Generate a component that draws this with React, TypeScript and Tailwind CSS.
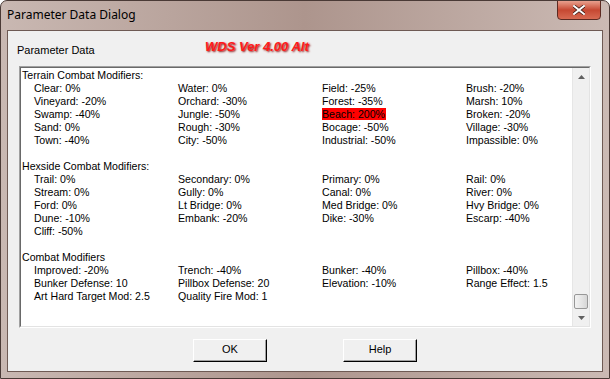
import React from 'react';

type Section = {
  title: string;
  rows: string[][];
};

const sections: Section[] = [
  {
    title: 'Terrain Combat Modifiers:',
    rows: [
      ['Clear: 0%', 'Water: 0%', 'Field: -25%', 'Brush: -20%'],
      ['Vineyard: -20%', 'Orchard: -30%', 'Forest: -35%', 'Marsh: 10%'],
      ['Swamp: -40%', 'Jungle: -50%', 'Beach: 200%', 'Broken: -20%'],
      ['Sand: 0%', 'Rough: -30%', 'Bocage: -50%', 'Village: -30%'],
      ['Town: -40%', 'City: -50%', 'Industrial: -50%', 'Impassible: 0%'],
    ],
  },
  {
    title: 'Hexside Combat Modifiers:',
    rows: [
      ['Trail: 0%', 'Secondary: 0%', 'Primary: 0%', 'Rail: 0%'],
      ['Stream: 0%', 'Gully: 0%', 'Canal: 0%', 'River: 0%'],
      ['Ford: 0%', 'Lt Bridge: 0%', 'Med Bridge: 0%', 'Hvy Bridge: 0%'],
      ['Dune: -10%', 'Embank: -20%', 'Dike: -30%', 'Escarp: -40%'],
      ['Cliff: -50%', '', '', ''],
    ],
  },
  {
    title: 'Combat Modifiers',
    rows: [
      ['Improved: -20%', 'Trench: -40%', 'Bunker: -40%', 'Pillbox: -40%'],
      ['Bunker Defense: 10', 'Pillbox Defense: 20', 'Elevation: -10%', 'Range Effect: 1.5'],
      ['Art Hard Target Mod: 2.5', 'Quality Fire Mod: 1', '', ''],
    ],
  },
];

function Cell({ text }: { text: string }) {
  if (text.startsWith('Beach')) {
    return (
      <div className="h-[13px] leading-[13px]">
        <span className="bg-[#ff0000] pr-[1px]">{text}</span>
      </div>
    );
  }
  return <div className="h-[13px] leading-[13px] whitespace-nowrap">{text}</div>;
}

function Scrollbar() {
  return (
    <div className="w-[17px] shrink-0 h-full bg-[#f0f0f0] border-l border-[#e6e6e6] flex flex-col">
      <div className="h-[17px] flex items-center justify-center">
        <svg width="7" height="4" viewBox="0 0 7 4">
          <path d="M3.5 0 L7 4 L0 4 Z" fill="#606060" />
        </svg>
      </div>
      <div className="flex-1" />
      <div className="h-[15px] mx-[1px] rounded-[2px] border border-[#979797] bg-gradient-to-r from-[#f2f2f2] via-[#e6e6e6] to-[#d6d6d6]" />
      <div className="h-[17px] flex items-center justify-center">
        <svg width="7" height="4" viewBox="0 0 7 4">
          <path d="M0 0 L7 0 L3.5 4 Z" fill="#606060" />
        </svg>
      </div>
    </div>
  );
}

function DlgButton({ label }: { label: string }) {
  return (
    <div className="w-[74px] h-[23px] border border-[#000] border-t-[#ffffff] border-l-[#ffffff] shadow-[inset_-1px_-1px_0_#a0a0a0] bg-[#f0f0f0] flex items-center justify-center text-[11px]">
      <span className="-mt-[1px]">{label}</span>
    </div>
  );
}

export default function App() {
  return (
    <div
      className="w-[610px] h-[379px] relative overflow-hidden rounded-t-[7px] border border-[#4a3a36] bg-gradient-to-r from-[#c9b8b2] via-[#ad958d] to-[#cbbab4] flex flex-col"
      style={{ fontFamily: '"Liberation Sans", Arial, sans-serif' }}
    >
      {/* title bar */}
      <div className="h-[29px] flex items-center pl-[6px] text-[12px] text-black" style={{ fontFamily: '"Noto Sans", "Liberation Sans", sans-serif' }}>
        <span className="-mt-[2px]">Parameter Data Dialog</span>
      </div>
      <div className="absolute right-[8px] top-[-1px] w-[44px] h-[20px] rounded-b-[4px] border border-[#5c2a22] bg-gradient-to-b from-[#e8a08e] via-[#c64832] to-[#d86a52] flex items-center justify-center">
        <svg width="12" height="10" viewBox="0 0 12 10">
          <path d="M1 1 L11 9 M11 1 L1 9" stroke="#3a1a14" strokeWidth="3.4" strokeLinecap="square" />
          <path d="M1 1 L11 9 M11 1 L1 9" stroke="#ffffff" strokeWidth="2" strokeLinecap="square" />
        </svg>
      </div>

      {/* client */}
      <div className="mx-[6px] h-[342px] border border-[#6e5a54] bg-[#f0f0f0] flex flex-col text-[11px] text-black">
        <div className="h-[35px] relative">
          <div className="absolute left-[9px] top-[11px]">Parameter Data</div>
          <div
            className="absolute left-[197px] top-[6px] text-[13px] font-bold italic text-[#ff1a1a]"
            style={{ textShadow: '1px 1px 2px #8a1010, 0 0 3px #ffffff' }}
          >
            WDS Ver 4.00 Alt
          </div>
        </div>

        {/* list box */}
        <div className="ml-[11px] w-[572px] h-[262px] border border-[#a0a0a0] border-r-[#ffffff] border-b-[#ffffff] flex">
          <div className="flex-1 min-w-0 border border-[#696969] border-r-[#e3e3e3] border-b-[#e3e3e3] flex bg-white">
            <div className="flex-1 min-w-0 overflow-hidden pl-[1px] pt-[1px] text-[10.6px]">
              {sections.map((s, i) => (
                <div key={i} className={i > 0 ? 'mt-[13px]' : ''}>
                  <div className="h-[13px] leading-[13px]">{s.title}</div>
                  {s.rows.map((r, j) => (
                    <div key={j} className="grid grid-cols-[144px_144px_144px_144px] pl-[12px]">
                      {r.map((c, k) => (
                        <Cell key={k} text={c} />
                      ))}
                    </div>
                  ))}
                </div>
              ))}
            </div>
            <Scrollbar />
          </div>
        </div>

        {/* buttons */}
        <div className="flex-1 flex items-center gap-[76px] pl-[185px] pt-[1px]">
          <DlgButton label="OK" />
          <DlgButton label="Help" />
        </div>
      </div>
    </div>
  );
}
